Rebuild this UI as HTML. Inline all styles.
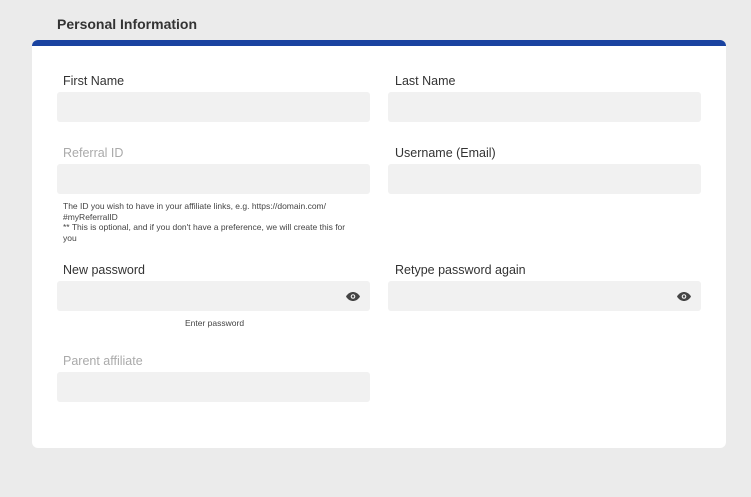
<!DOCTYPE html>
<html><head><style>
*{margin:0;padding:0;box-sizing:border-box}
body{width:751px;height:497px;background:#ebebeb;font-family:"Liberation Sans",sans-serif;position:relative;overflow:hidden}
.h{position:absolute;left:57px;top:16px;font-size:14px;font-weight:bold;color:#333}
.card{position:absolute;left:32px;top:40px;width:694px;height:408px;background:#fff;border-radius:6px;border-top:6px solid #1a43a0}
.l{position:absolute;font-size:12.5px;color:#333}
.g{color:#aaa}
.i{position:absolute;width:313px;height:30px;background:#f1f1f1;border-radius:3px}
.t{position:absolute;font-size:8.5px;color:#444;line-height:10.5px;white-space:nowrap}
.eye{position:absolute;right:10px;top:11px}
</style></head><body>
<div class="h">Personal Information</div>
<div class="card"></div>
<div class="l" style="left:63px;top:74px">First Name</div>
<div class="l" style="left:395px;top:74px">Last Name</div>
<div class="i" style="left:57px;top:92px"></div>
<div class="i" style="left:388px;top:92px"></div>
<div class="l g" style="left:63px;top:146px">Referral ID</div>
<div class="l" style="left:395px;top:146px">Username (Email)</div>
<div class="i" style="left:57px;top:164px"></div>
<div class="i" style="left:388px;top:164px"></div>
<div class="t" style="left:63px;top:201px">The ID you wish to have in your affiliate links, e.g. https://domain.com/<br>#myReferralID<br>** This is optional, and if you don't have a preference, we will create this for<br>you</div>
<div class="l" style="left:63px;top:263px">New password</div>
<div class="l" style="left:395px;top:263px">Retype password again</div>
<div class="i" style="left:57px;top:281px"><svg class="eye" width="14" height="9" viewBox="0 0 14 9"><path d="M0 4.5C2 1 5 0 7 0s5 1 7 4.5C12 8 9 9 7 9S2 8 0 4.5z" fill="#444"/><circle cx="7" cy="4.5" r="2.3" fill="#f1f1f1"/><circle cx="7" cy="4.5" r="1.2" fill="#444"/></svg></div>
<div class="i" style="left:388px;top:281px"><svg class="eye" width="14" height="9" viewBox="0 0 14 9"><path d="M0 4.5C2 1 5 0 7 0s5 1 7 4.5C12 8 9 9 7 9S2 8 0 4.5z" fill="#444"/><circle cx="7" cy="4.5" r="2.3" fill="#f1f1f1"/><circle cx="7" cy="4.5" r="1.2" fill="#444"/></svg></div>
<div class="t" style="left:185px;top:318px">Enter password</div>
<div class="l g" style="left:63px;top:354px">Parent affiliate</div>
<div class="i" style="left:57px;top:372px"></div>
</body></html>
